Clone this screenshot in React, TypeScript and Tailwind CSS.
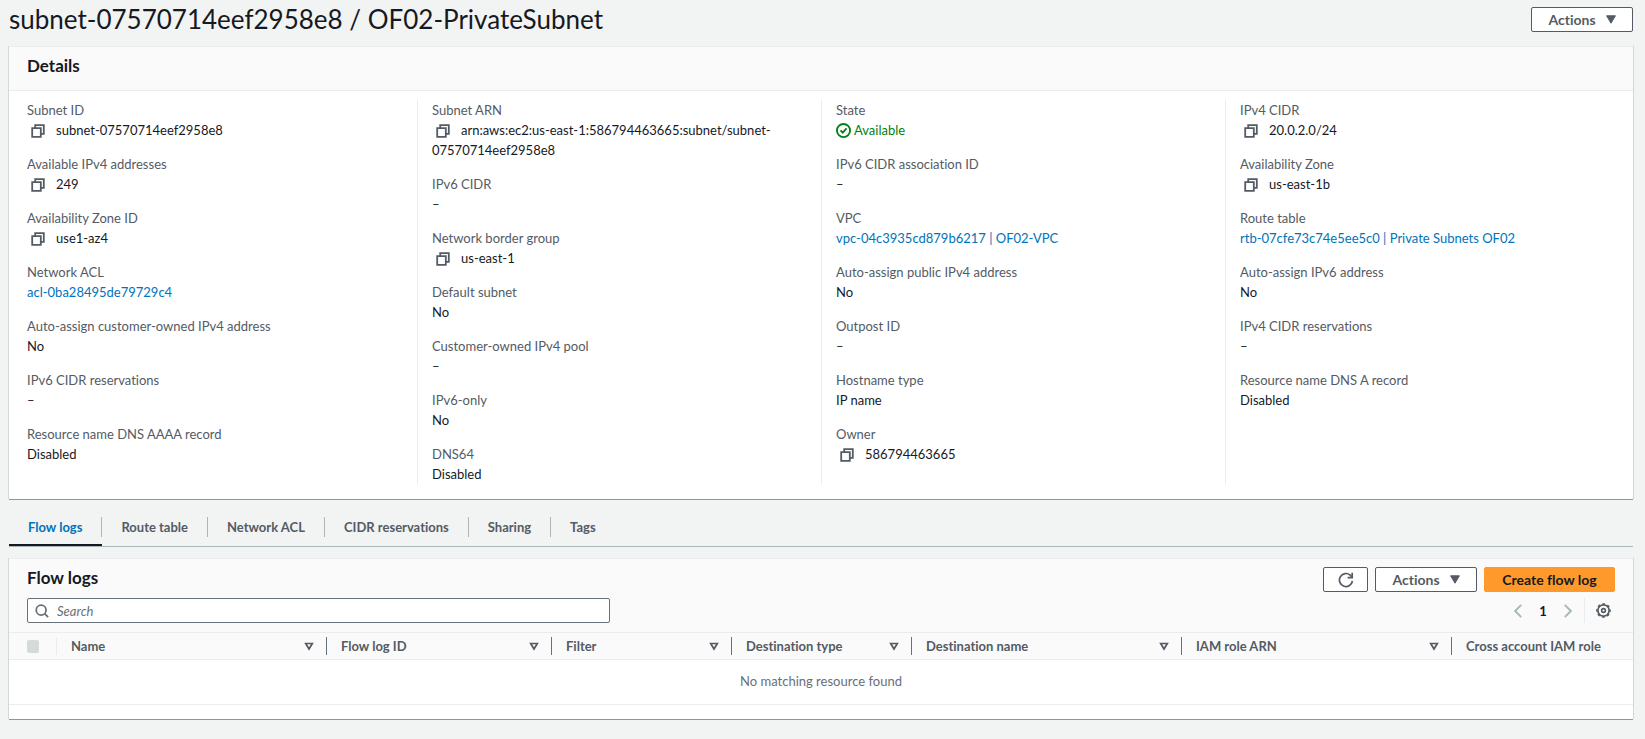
import type { ReactNode } from "react";

const CopyIcon = () => (
  <svg viewBox="0 0 14 14" className="size-[14px]" fill="none" stroke="currentColor" strokeWidth="1.8">
    <path d="M1.2 4.2h8.6v8.6H1.2z" />
    <path d="M4.2 4V1.2h8.6v8.6H10" />
  </svg>
);

const CheckIcon = () => (
  <svg viewBox="0 0 16 16" className="size-[15px]" fill="none" stroke="currentColor" strokeWidth="2">
    <circle cx="8" cy="8" r="7" />
    <path d="M4.8 7.8 7.2 10.2 11.2 5.8" />
  </svg>
);

const CaretIcon = () => (
  <svg viewBox="0 0 10 9" className="h-[9px] w-[10px]" fill="currentColor">
    <path d="M.6.8h8.8L5 8.2z" stroke="currentColor" strokeLinejoin="round" />
  </svg>
);

const SortIcon = () => (
  <svg viewBox="0 0 10 9" className="h-[9px] w-[10px] shrink-0" fill="none" stroke="currentColor" strokeWidth="1.7">
    <path d="M1.7 1.5h6.6L5 7z" />
  </svg>
);

const RefreshIcon = () => (
  <svg viewBox="0 0 16 16" className="size-4" fill="none" stroke="currentColor" strokeWidth="1.7">
    <path d="M14.4 8.8A6.5 6.5 0 1 1 12.2 3.1L14 5" />
    <path d="M14.2 .8v4.9H9.6" />
  </svg>
);

const SearchIcon = () => (
  <svg viewBox="0 0 16 16" className="size-[14px] shrink-0" fill="none" stroke="currentColor" strokeWidth="2">
    <circle cx="7" cy="7" r="5.6" />
    <path d="M11 11 15 15" />
  </svg>
);

const GearIcon = () => (
  <svg viewBox="0 0 16 16" className="size-[15px]" fill="none" stroke="currentColor">
    <circle cx="8" cy="8" r="6" strokeWidth="1.8" />
    <circle cx="8" cy="8" r="7.1" strokeWidth="1.5" strokeDasharray="2.79 2.79" strokeDashoffset="1.4" />
    <circle cx="8" cy="8" r="2" strokeWidth="1.7" />
  </svg>
);

const PrevIcon = () => (
  <svg viewBox="0 0 8 14" className="h-[14px] w-2" fill="none" stroke="currentColor" strokeWidth="1.9">
    <path d="M7.2.8 1.2 7l6 6.2" />
  </svg>
);

const NextIcon = () => (
  <svg viewBox="0 0 8 14" className="h-[14px] w-2" fill="none" stroke="currentColor" strokeWidth="1.9">
    <path d="M.8.8 6.8 7l-6 6.2" />
  </svg>
);

type Field = { label: string; value: string; kind?: "copy" | "link" | "status" };

const columns: Field[][] = [
  [
    { label: "Subnet ID", value: "subnet-07570714eef2958e8", kind: "copy" },
    { label: "Available IPv4 addresses", value: "249", kind: "copy" },
    { label: "Availability Zone ID", value: "use1-az4", kind: "copy" },
    { label: "Network ACL", value: "acl-0ba28495de79729c4", kind: "link" },
    { label: "Auto-assign customer-owned IPv4 address", value: "No" },
    { label: "IPv6 CIDR reservations", value: "–" },
    { label: "Resource name DNS AAAA record", value: "Disabled" },
  ],
  [
    { label: "Subnet ARN", value: "arn:aws:ec2:us-east-1:586794463665:subnet/subnet-07570714eef2958e8", kind: "copy" },
    { label: "IPv6 CIDR", value: "–" },
    { label: "Network border group", value: "us-east-1", kind: "copy" },
    { label: "Default subnet", value: "No" },
    { label: "Customer-owned IPv4 pool", value: "–" },
    { label: "IPv6-only", value: "No" },
    { label: "DNS64", value: "Disabled" },
  ],
  [
    { label: "State", value: "Available", kind: "status" },
    { label: "IPv6 CIDR association ID", value: "–" },
    { label: "VPC", value: "vpc-04c3935cd879b6217 | OF02-VPC", kind: "link" },
    { label: "Auto-assign public IPv4 address", value: "No" },
    { label: "Outpost ID", value: "–" },
    { label: "Hostname type", value: "IP name" },
    { label: "Owner", value: "586794463665", kind: "copy" },
  ],
  [
    { label: "IPv4 CIDR", value: "20.0.2.0/24", kind: "copy" },
    { label: "Availability Zone", value: "us-east-1b", kind: "copy" },
    { label: "Route table", value: "rtb-07cfe73c74e5ee5c0 | Private Subnets OF02", kind: "link" },
    { label: "Auto-assign IPv6 address", value: "No" },
    { label: "IPv4 CIDR reservations", value: "–" },
    { label: "Resource name DNS A record", value: "Disabled" },
  ],
];

const tabs = ["Flow logs", "Route table", "Network ACL", "CIDR reservations", "Sharing", "Tags"];

const tableColumns = [
  { name: "Name", width: "w-[270px]" },
  { name: "Flow log ID", width: "w-[225px]" },
  { name: "Filter", width: "w-[180px]" },
  { name: "Destination type", width: "w-[180px]" },
  { name: "Destination name", width: "w-[270px]" },
  { name: "IAM role ARN", width: "w-[270px]" },
  { name: "Cross account IAM role", width: "" },
];

function FieldValue({ field }: { field: Field }) {
  if (field.kind === "copy") {
    return (
      <>
        <button aria-label={`Copy ${field.label}`} className="mr-[11px] ml-1 inline-block align-[-3px] text-[#545b64]">
          <CopyIcon />
        </button>
        {field.value}
      </>
    );
  }
  if (field.kind === "link") {
    return (
      <a href="#" className="text-[#0073bb]">
        {field.value}
      </a>
    );
  }
  if (field.kind === "status") {
    return (
      <span className="flex items-center gap-[3px] text-[#008212]">
        <CheckIcon />
        {field.value}
      </span>
    );
  }
  return <>{field.value}</>;
}

function Panel({ children }: { children: ReactNode }) {
  return (
    <section className="border-t border-[#eaeded] bg-white shadow-[0_1px_0_0_#8c999b,1px_0_0_0_#d2d7d8,-1px_0_0_0_#d2d7d8]">
      {children}
    </section>
  );
}

const buttonBase = "flex h-[25px] items-center justify-center rounded-[2px] border text-sm font-bold";
const buttonNormal = "border-[#545b64] bg-white text-[#545b64]";

function ActionsButton() {
  return (
    <button className={`${buttonBase} ${buttonNormal} w-[102px] gap-[10px]`}>
      Actions
      <CaretIcon />
    </button>
  );
}

export default function App() {
  return (
    <main className="min-h-screen bg-[#f2f3f3] pr-3 pb-[18px] pl-[9px] font-[Lato,'Open_Sans',sans-serif] text-[13px] leading-5 text-[#16191f] [font-variant-ligatures:none]">
      <header className="flex h-[46px] items-start justify-between pt-[7px]">
        <h1 className="text-[26px] leading-6">subnet-07570714eef2958e8 / OF02-PrivateSubnet</h1>
        <ActionsButton />
      </header>

      <Panel>
        <div className="border-b border-[#eaeded] bg-[#fafafa] px-[18px] pt-2 pb-[14px]">
          <h2 className="text-[17px] leading-[21px] font-bold">Details</h2>
        </div>
        <div className="grid grid-cols-4 px-1 pt-[9px] pb-[15px]">
          {columns.map((fields, i) => (
            <dl
              key={i}
              className={`flex flex-col gap-[14px] pl-[14px] ${i === 0 ? "" : "border-l border-[#eaeded]"}`}
            >
              {fields.map((field) => (
                <div key={field.label}>
                  <dt className="text-[#545b64]">{field.label}</dt>
                  <dd className="pr-[14px] break-words">
                    <FieldValue field={field} />
                  </dd>
                </div>
              ))}
            </dl>
          ))}
        </div>
      </Panel>

      <nav className="mt-[10px] mb-[11px] flex border-b border-[#aab7b8] font-bold">
        {tabs.map((tab, i) => (
          <div key={tab} className={`border-b-2 pt-2 pb-[7px] ${i === 0 ? "border-[#16191f]" : "border-transparent"}`}>
            <a
              href="#"
              className={`block h-5 px-[19px] ${i === 0 ? "text-[#0073bb]" : "text-[#545b64]"} ${
                i < tabs.length - 1 ? "border-r border-[#aab7b8]" : ""
              }`}
            >
              {tab}
            </a>
          </div>
        ))}
      </nav>

      <Panel>
        <div className="flex flex-col gap-[6px] bg-[#fafafa] px-[18px] pt-2 pb-[9px]">
          <div className="flex items-start justify-between">
            <h2 className="text-[17px] leading-[21px] font-bold">Flow logs</h2>
            <div className="flex gap-[7px]">
              <button aria-label="Refresh" className={`${buttonBase} ${buttonNormal} w-[45px]`}>
                <RefreshIcon />
              </button>
              <ActionsButton />
              <button className={`${buttonBase} w-[131px] border-[#ff992b] bg-[#ff992b] text-[#16191f]`}>
                Create flow log
              </button>
            </div>
          </div>
          <div className="flex items-center justify-between">
            <label className="flex h-[25px] w-[583px] items-center gap-2 rounded-[2px] border border-[#687078] bg-white px-[7px] text-[#687078]">
              <SearchIcon />
              <input
                type="search"
                aria-label="Search flow logs"
                placeholder="Search"
                className="min-w-0 flex-1 outline-none placeholder:text-[#687078] placeholder:italic"
              />
            </label>
            <div className="flex items-center text-[#aab7b8]">
              <button aria-label="Previous page">
                <PrevIcon />
              </button>
              <span className="w-[42px] text-center font-bold text-[#16191f]">1</span>
              <button aria-label="Next page">
                <NextIcon />
              </button>
              <span className="ml-3 h-[25px] border-l border-[#eaeded]" />
              <button aria-label="Preferences" className="mr-1 ml-[11px] text-[#545b64]">
                <GearIcon />
              </button>
            </div>
          </div>
        </div>
        <table className="w-full table-fixed border-collapse">
          <thead>
            <tr className="border-y border-[#eaeded] bg-[#fafafa] text-[#545b64]">
              <th className="w-12 p-0">
                <div className="flex h-[18px] items-center border-r border-[#eaeded] pl-[18px]">
                  <input
                    type="checkbox"
                    disabled
                    aria-label="Select all flow logs"
                    className="h-[13px] w-3 appearance-none rounded-[2px] bg-[#d5dbdb]"
                  />
                </div>
              </th>
              {tableColumns.map((column, i) => (
                <th key={column.name} className={`h-[27px] p-0 text-left font-bold ${column.width}`}>
                  <div
                    className={`flex h-[18px] items-center justify-between pr-[12px] pl-[14px] ${
                      i < tableColumns.length - 1 ? "border-r border-[#687078]" : ""
                    }`}
                  >
                    <span className="whitespace-nowrap">{column.name}</span>
                    {i < tableColumns.length - 1 && <SortIcon />}
                  </div>
                </th>
              ))}
            </tr>
          </thead>
          <tbody>
            <tr className="border-b border-[#eaeded]">
              <td colSpan={8} className="h-[45px] p-0 pb-[2px] text-center text-[#687078]">
                No matching resource found
              </td>
            </tr>
          </tbody>
        </table>
        <div className="h-[14px]" />
      </Panel>
    </main>
  );
}
